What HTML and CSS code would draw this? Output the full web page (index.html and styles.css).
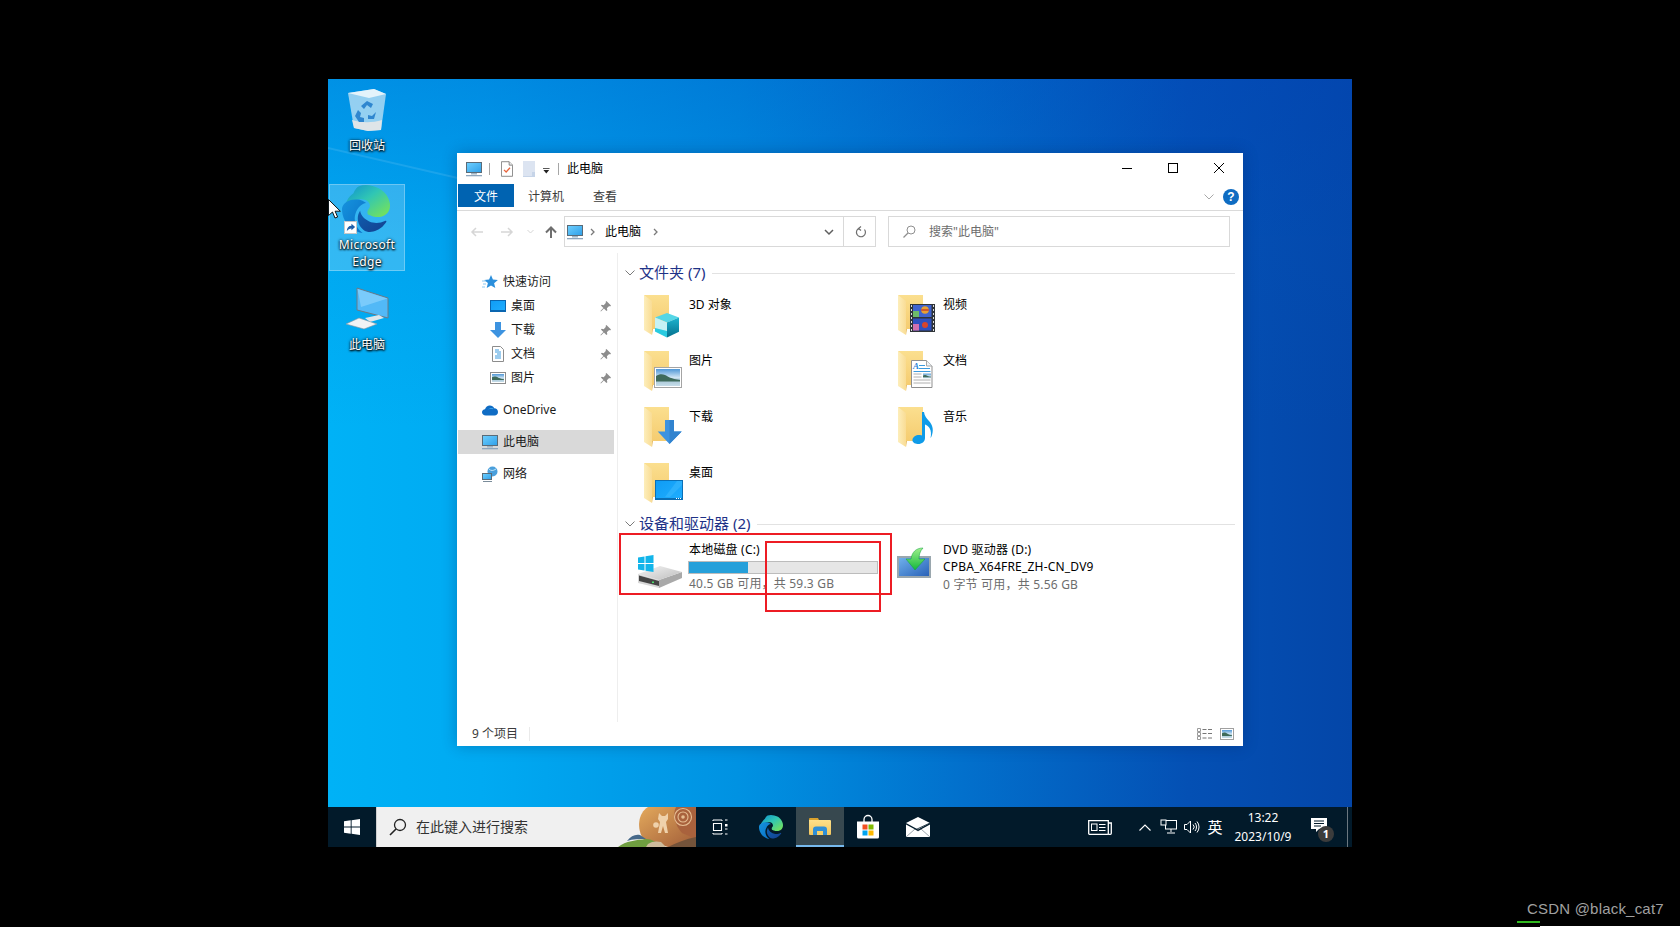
FILE: index.html
```html
<!DOCTYPE html>
<html lang="zh-CN">
<head>
<meta charset="utf-8">
<title>此电脑</title>
<link rel="stylesheet" href="styles.css">
</head>
<body>
<svg class="defs" aria-hidden="true">
  <defs>
    <linearGradient id="g-screen" x1="0" y1="0" x2="1" y2="1"><stop offset="0" stop-color="#6fd0ff"/><stop offset="1" stop-color="#2f9fe8"/></linearGradient>
    <linearGradient id="g-back" x1="0" y1="0" x2="0" y2="1"><stop offset="0" stop-color="#fbdf8f"/><stop offset="1" stop-color="#f5cc70"/></linearGradient>
    <linearGradient id="g-flap" x1="0" y1="0" x2="1" y2="0"><stop offset="0" stop-color="#fdeebb"/><stop offset="1" stop-color="#f9dc94"/></linearGradient>
    <linearGradient id="g-edge-top" x1="0" y1="0" x2="1" y2="1"><stop offset="0" stop-color="#0c8ed0"/><stop offset=".45" stop-color="#30c6b4"/><stop offset="1" stop-color="#7fe64e"/></linearGradient>
    <linearGradient id="g-edge-left" x1="0" y1="0" x2="1" y2="1"><stop offset="0" stop-color="#1593de"/><stop offset="1" stop-color="#0a6ec4"/></linearGradient>
    <linearGradient id="g-edge-low" x1="0" y1="0" x2="1" y2="1"><stop offset="0" stop-color="#0f5fb0"/><stop offset="1" stop-color="#13408f"/></linearGradient>
    <linearGradient id="g-sky" x1="0" y1="0" x2="0" y2="1"><stop offset="0" stop-color="#4f97d6"/><stop offset="1" stop-color="#dfeef7"/></linearGradient>
    <linearGradient id="g-water" x1="0" y1="0" x2="0" y2="1"><stop offset="0" stop-color="#6f9db4"/><stop offset="1" stop-color="#c6dde9"/></linearGradient>
    <linearGradient id="g-desk" x1="0" y1="0" x2="1" y2="1"><stop offset="0" stop-color="#0f9cf5"/><stop offset="1" stop-color="#20aeff"/></linearGradient>
    <linearGradient id="g-dvd" x1="0" y1="0" x2="1" y2="1"><stop offset="0" stop-color="#6fb0ec"/><stop offset="1" stop-color="#2a62b8"/></linearGradient>
    <linearGradient id="g-green" x1="0" y1="0" x2="0" y2="1"><stop offset="0" stop-color="#9cf08a"/><stop offset="1" stop-color="#14b83c"/></linearGradient>
    <linearGradient id="g-hdd" x1="0" y1="0" x2="1" y2="1"><stop offset="0" stop-color="#f4f4f4"/><stop offset="1" stop-color="#bdbdbd"/></linearGradient>
    <linearGradient id="g-cube" x1="0" y1="0" x2="0" y2="1"><stop offset="0" stop-color="#1db4cf"/><stop offset="1" stop-color="#05708d"/></linearGradient>
    <linearGradient id="g-doodle" x1="0" y1="0" x2="1" y2="1"><stop offset="0" stop-color="#e3a95c"/><stop offset="1" stop-color="#a05c38"/></linearGradient>
    <linearGradient id="g-taskfold" x1="0" y1="0" x2="0" y2="1"><stop offset="0" stop-color="#fde08a"/><stop offset="1" stop-color="#f3c65e"/></linearGradient>

    <symbol id="scene" viewBox="0 0 24 17" preserveAspectRatio="none">
      <rect width="24" height="17" fill="url(#g-water)"/>
      <rect width="24" height="9.500" fill="url(#g-sky)"/>
      <path d="M0 7c3-2 6-2.500 9-1 3 1.500 6 4 15 5v1.500H0z" fill="#3e6a5a"/>
    </symbol>
    <symbol id="i-pc" viewBox="0 0 16 16">
      <rect x=".5" y="1.500" width="15" height="10" fill="url(#g-screen)" stroke="#5a6b78"/>
      <rect x="5" y="12" width="6" height="1.500" fill="#9fb4c4"/>
      <rect x="0" y="14" width="16" height="1.300" fill="#8ea6bd"/>
    </symbol>
    <symbol id="i-star" viewBox="0 0 16 16">
      <path d="M9 1l1.900 4.600 5 .4-3.800 3.200 1.200 4.900L9 11.500 4.700 14l1.200-4.900L2.100 6l5-.4z" fill="#2b8fdc"/>
      <path d="M0 7h4M1 10h3M0 13h3" stroke="#8cc8f0" stroke-width="1"/>
    </symbol>
    <symbol id="i-desk" viewBox="0 0 16 16">
      <rect x=".5" y="2.500" width="15" height="11" fill="url(#g-desk)" stroke="#0a66b0"/>
      <rect x="1" y="12" width="14" height="1" fill="#0a66b0"/>
    </symbol>
    <symbol id="i-down" viewBox="0 0 16 16">
      <path d="M5 0h6v8h5l-8 8-8-8h5z" fill="#3d93e0"/>
    </symbol>
    <symbol id="i-doc" viewBox="0 0 16 16">
      <path d="M2.500 .5h8l3 3v12h-11z" fill="#fff" stroke="#8c8c8c"/>
      <path d="M5 4h4M5 6h6M7 8h4M5 10h6M5 12h6" stroke="#3b9ade"/>
    </symbol>
    <symbol id="i-pic" viewBox="0 0 16 16">
      <rect x=".5" y="2.500" width="15" height="11" fill="#fff" stroke="#8c8c8c"/>
      <use href="#scene" x="2" y="4" width="12" height="8"/>
    </symbol>
    <symbol id="i-pin" viewBox="0 0 12 12">
      <path d="M7 0l5 5-1 1-1-.5L7.500 8l.5 2-1 1-2.700-2.700L1 11.500.5 11l3.200-3.300L1 5l1-1 2 .5L6.500 2 6 1z" fill="#8d8d8d"/>
    </symbol>
    <symbol id="i-cloud" viewBox="0 0 16 16">
      <path d="M4 13.500C1.500 13.500 0 12 0 10.300 0 8.500 1.300 7.300 3 7.200 3.700 5 5.500 3.500 7.800 3.500c2 0 3.600 1 4.400 2.700 2.200 0 3.800 1.600 3.800 3.700 0 2.100-1.500 3.600-3.500 3.600z" fill="#0f6cc4"/>
      <path d="M6 7.500c1-1.500 3.500-2 5.500-1.300l-.5 1c-2-.2-3.500 0-5 .3z" fill="#3aa0ea"/>
    </symbol>
    <symbol id="i-net" viewBox="0 0 16 16">
      <circle cx="10.500" cy="5.500" r="5" fill="#4a9fdc"/>
      <path d="M7 3c2 2 4 2 7 0" stroke="#bfe3f7" fill="none"/>
      <rect x=".5" y="7.500" width="9" height="6" fill="url(#g-screen)" stroke="#5a6b78"/>
      <rect x="1" y="15" width="9" height="1" fill="#7a8c9a"/>
    </symbol>
    <symbol id="i-check" viewBox="0 0 14 18">
      <path d="M.5 .5h9l4 4v13H.5z" fill="#fff" stroke="#777"/>
      <path d="M9.500 .5v4h4" fill="#eee" stroke="#777"/>
      <path d="M3.500 10l2.500 2.500 4.500-5" fill="none" stroke="#e8643c" stroke-width="1.500"/>
    </symbol>
    <symbol id="i-blank" viewBox="0 0 12 16">
      <rect width="12" height="16" fill="#dce4f1"/>
      <path d="M9 11h3v5H0v-1h9z" fill="#c6d4e8"/>
    </symbol>
    <symbol id="i-folder" viewBox="0 0 48 48">
      <path d="M1 3h25v34H9z" fill="url(#g-back)"/>
      <path d="M1 3l8 6v34l-8-5z" fill="url(#g-flap)"/>
      <path d="M9 37v6l1-6z" fill="#e4b962"/>
    </symbol>
    <symbol id="o-cube" viewBox="0 0 48 48">
      <path d="M24 21l12 4.500L24 30.500 12 25.500z" fill="#55d6e6"/>
      <path d="M12 25.500l12 5V45.500l-12-6z" fill="#c6f2f4"/>
      <path d="M24 30.500l12-5v14.200l-12 5.800z" fill="url(#g-cube)"/>
      <path d="M12 36l12 3v6.500l-12-6z" fill="#29cbe0"/>
    </symbol>
    <symbol id="o-pic" viewBox="0 0 48 48">
      <rect x="11.500" y="19.500" width="27" height="20" fill="#fff" stroke="#a4a4a4"/>
      <use href="#scene" x="13" y="21" width="24" height="17"/>
    </symbol>
    <symbol id="o-down" viewBox="0 0 48 48">
      <path d="M22 16h9v11.500h7.700L26.500 40 14.700 27.500H22z" fill="#3d93e0"/>
      <path d="M26.500 16H31v11.500h7.700L26.500 40z" fill="#3183cf"/>
    </symbol>
    <symbol id="o-desk" viewBox="0 0 48 48">
      <rect x="12.500" y="20.500" width="27" height="19" fill="url(#g-desk)" stroke="#0b6fb6"/>
      <path d="M13 38h26v1.500H13z" fill="#0b6fb6"/>
      <path d="M33 38.500h1M35 38.500h1M37 38.500h1" stroke="#fff"/>
      <path d="M22 37l12-16h5v4L27 37z" fill="#3fbcff" opacity=".5"/>
    </symbol>
    <symbol id="o-film" viewBox="0 0 48 48">
      <rect x="13" y="12" width="25" height="28" fill="#2f3438"/>
      <rect x="16" y="13" width="18.500" height="12" fill="#3f63cf"/>
      <rect x="16" y="26.500" width="18.500" height="12" fill="#2e50c0"/>
      <path d="M16 19h6v6h-6z" fill="#6dbb6a"/>
      <circle cx="28" cy="18" r="3.800" fill="#e8a030"/>
      <path d="M24.200 18h7.600" stroke="#c8402a" stroke-width="1.500"/>
      <circle cx="28" cy="33" r="3" fill="#d8452c"/>
      <path d="M16 32h6v6.500h-6z" fill="#d070b0"/>
      <path d="M14 14h1M14 18h1M14 22h1M14 26h1M14 30h1M14 34h1M14 38h1M36 14h1M36 18h1M36 22h1M36 26h1M36 30h1M36 34h1M36 38h1" stroke="#ddd" stroke-width="2"/>
    </symbol>
    <symbol id="o-docs" viewBox="0 0 48 48">
      <path d="M14.500 12.500h15l5.500 5.500v21.500H14.500z" fill="#fff" stroke="#8f8f8f"/>
      <path d="M29.500 12.500V18H35" fill="#eef3f8" stroke="#a6a6a6"/>
      <text class="doc-a" x="16" y="21">A</text>
      <path d="M22 17.500h6M22 20.500h11M16.500 23.500h17" stroke="#3b9ade"/>
      <path d="M16.500 26h8M16.500 29h8M16.500 32h17M16.500 35h17" stroke="#b0b0b0"/>
      <use href="#scene" x="26" y="25.500" width="8" height="5"/>
    </symbol>
    <symbol id="o-note" viewBox="0 0 48 48">
      <path d="M25 8l2 0c.5 4 2.500 6 5 9 3 3.500 5 7.500 3 14-.5 1.500-1 2.500-1.500 3 .8-3.500.8-7-1-10-1.200-2-3-3-4.500-3.500V34c0 4-3.500 6.300-7.500 6-3-.2-5.500-2-5-4.500.5-3 4-5 7.500-4.500 1 .1 1.500.3 2 .5z" fill="#0f9be8"/>
    </symbol>
    <symbol id="i-hdd" viewBox="0 0 48 48">
      <path d="M2 34l21 6v8L2 43z" fill="#d8d8d8"/>
      <path d="M23 40l23-8v6l-23 10z" fill="#a9a9a9"/>
      <path d="M2 34l22-8 22 6-23 8z" fill="url(#g-hdd)"/>
      <path d="M3 35.500l20 5.500v5L3 41z" fill="#454545"/>
      <rect x="16" y="41.500" width="2" height="1.500" fill="#4be06a"/>
      <path d="M2 17.500l6.500-1v6.500H2zM9.500 16.300l8-1.300V23h-8zM2 24h6.500v6.500L2 29.500zM9.500 24h8v8l-8-1.300z" fill="#12b5ea"/>
    </symbol>
    <symbol id="i-dvd" viewBox="0 0 48 48">
      <rect x="7" y="16" width="34" height="22" fill="#9aa7ae"/>
      <rect x="9" y="18" width="30" height="18" fill="url(#g-dvd)"/>
      <path d="M33 8c-7 0-11 4-12 11h-5l9 11 10-11h-6c0-4 1-8 4-11z" fill="url(#g-green)" stroke="#0e9e3a" stroke-width=".5"/>
    </symbol>
    <symbol id="i-details" viewBox="0 0 16 12">
      <path d="M.5 .5h3v3h-3zM.5 4.500h3v3h-3zM.5 8.500h3v3h-3z" fill="#fff" stroke="#9a9a9a"/>
      <path d="M5.500 1.500h4M11 1.500h4M5.500 5.500h4M11 5.500h4M5.500 10h4M11 10h4" stroke="#777"/>
    </symbol>
    <symbol id="i-large" viewBox="0 0 14 12">
      <rect x=".5" y=".5" width="13" height="11" fill="#fff" stroke="#a0a0a0"/>
      <use href="#scene" x="2" y="2" width="10" height="8"/>
    </symbol>
    <symbol id="i-edge" viewBox="0 0 24 24">
      <path d="M11.960.06q1.700 0 3.330.39 1.630.38 3.070 1.150 1.430.77 2.620 1.930 1.180 1.160 1.980 2.700.49.94.76 1.960.28 1 .28 2.080 0 .89-.23 1.700-.24.8-.69 1.480-.45.68-1.100 1.220-.64.53-1.450.88-.54.24-1.110.36-.58.13-1.160.13-.42 0-.97-.03-.54-.03-1.100-.12-.55-.09-1.090-.28-.54-.19-1-.48T13.370 15q-.3-.28-.5-.55-.17-.31-.17-.84 0-.35.13-.69.13-.33.3-.63.19-.3.38-.59.2-.28.34-.53.13-.33.13-.62 0-.65-.3-1.300-.29-.65-.9-1.130-.68-.52-1.520-.75-.84-.22-1.730-.22-1.340 0-2.500.42-1.150.41-2.150 1.110-1 .7-1.850 1.600-.83.9-1.500 1.870-.02-1.250.28-2.410.3-1.170.85-2.200.55-1.030 1.330-1.910.77-.88 1.720-1.550Q7 1.070 8.550.57q1.560-.5 3.410-.51z" fill="url(#g-edge-top)"/>
      <path d="M6.360 16.590q0 1.100.27 2.150.27 1.060.78 2.030.51.96 1.240 1.770.74.82 1.660 1.400-1.470-.2-2.800-.74-1.330-.55-2.480-1.370-1.150-.83-2.080-1.900-.92-1.070-1.580-2.330T.36 14.940Q0 13.540 0 12.060q0-.81.32-1.490.31-.68.83-1.230.53-.55 1.200-.96.66-.4 1.350-.66.74-.27 1.500-.39.78-.12 1.550-.12.7 0 1.420.1.720.12 1.400.35.68.23 1.320.57.63.35 1.160.83-.35 0-.7.07-.33.07-.65.23v-.02q-.63.28-1.200.74-.57.46-1.050 1.040-.48.58-.87 1.260-.38.67-.65 1.390-.27.71-.42 1.440-.15.72-.15 1.380z" fill="url(#g-edge-left)"/>
      <path d="M21.860 17.860q.14 0 .25.12.1.13.1.25t-.11.33l-.32.46-.43.53-.44.5q-.21.25-.38.42l-.22.23q-.58.53-1.340 1.040-.76.51-1.600.91-.86.4-1.740.64t-1.670.24q-.9 0-1.690-.28-.8-.28-1.480-.78-.68-.5-1.220-1.170-.53-.66-.92-1.440-.38-.77-.58-1.600-.2-.83-.2-1.670 0-1 .32-1.960.33-.97.87-1.800.14.95.55 1.770.41.82 1.020 1.500.6.68 1.380 1.210.78.54 1.640.9.86.36 1.770.56.92.2 1.800.2 1.120 0 2.180-.24 1.060-.23 2.060-.72l.2-.1.2-.05z" fill="url(#g-edge-low)"/>
    </symbol>
    <symbol id="i-win" viewBox="0 0 16 16">
      <path d="M0 2.300l6.700-1v6.300H0zM7.600 1.200L16 0v7.600H7.600zM0 8.400h6.700v6.300l-6.700-1zM7.600 8.400H16V16l-8.400-1.200z" fill="#fff"/>
    </symbol>
  </defs>
</svg>

<main class="desktop">
  <div class="canvas">
    <div class="ray ray-a"></div>

    <div class="d-icon d-bin">
      <svg class="d-art" viewBox="0 0 48 48">
        <path d="M5 6l26-4 12 5-5 36-13 1-14-3z" fill="#b9dff4" fill-opacity=".8"/>
        <path d="M5 6l26-4 12 5-17 4z" fill="#e4f3fb"/>
        <path d="M9 33c10 3 20 3 30 0l-1 10-13 1-14-3z" fill="#dfe5e8"/>
        <path d="M24 14l6 3-2 4-4-3-3 4-3-3zM33 25l-2 7h-6v-4l4 1zM15 23l3 3-1 4 4 1v4h-5l-4-6z" fill="#2f86cf"/>
      </svg>
      <span class="d-label">回收站</span>
    </div>

    <div class="d-icon d-edge">
      <svg class="d-art"><use href="#i-edge"/></svg>
      <svg class="d-short" viewBox="0 0 14 14">
        <rect x=".5" y=".5" width="13" height="13" fill="#fff" stroke="#c8c8c8"/>
        <path d="M3 11c0-4 2-6 5-6V3l4 3.500L8 10V8c-2 0-3.500 1-5 3z" fill="#1f5fa8"/>
      </svg>
      <span class="d-label d-label-latin">Microsoft Edge</span>
    </div>

    <div class="d-icon d-pc">
      <svg class="d-art" viewBox="0 0 48 48">
        <path d="M14 -1l31 10v20L14 21z" fill="#52b9f7" stroke="#6d7a86"/>
        <path d="M14.500 0l30 9.500L18 18z" fill="#9adbff" opacity=".55"/>
        <path d="M22 29l14-3 5 3-14 4z" fill="#dfe7ec"/>
        <path d="M3 35l13-6 18 6-13 5z" fill="#f0f3f5" stroke="#8a96a0" stroke-width=".6"/>
      </svg>
      <span class="d-label">此电脑</span>
    </div>

    <svg class="cursor" viewBox="0 0 13 20">
      <path d="M.5 .5v16l4-3.500 2.500 6 2.600-1-2.500-5.800h5.200z" fill="#fff" stroke="#000" stroke-width=".9"/>
    </svg>

    <section class="window">
      <header class="titlebar">
        <svg class="i16"><use href="#i-pc"/></svg>
        <span class="qsep"></span>
        <svg class="qa-doc"><use href="#i-check"/></svg>
        <svg class="qa-doc"><use href="#i-blank"/></svg>
        <svg class="qa-caret" viewBox="0 0 8 8"><path d="M0 1h7.500v1H0zM.5 3.500h6.500L3.750 7.500z" fill="#222"/></svg>
        <span class="qsep qsep-b"></span>
        <span class="win-title">此电脑</span>
        <div class="win-ctrls">
          <button class="ctl"><svg class="ctl-i" viewBox="0 0 10 10"><path d="M0 5.500h10" stroke="#000"/></svg></button>
          <button class="ctl"><svg class="ctl-i" viewBox="0 0 10 10"><rect x=".5" y=".5" width="9" height="9" fill="none" stroke="#000"/></svg></button>
          <button class="ctl"><svg class="ctl-i" viewBox="0 0 10 10"><path d="M0 0l10 10M10 0L0 10" stroke="#000"/></svg></button>
        </div>
      </header>

      <nav class="tabs">
        <span class="tab tab-file">文件</span>
        <span class="tab">计算机</span>
        <span class="tab">查看</span>
        <svg class="tab-chev" viewBox="0 0 10 6"><path d="M.5 .5L5 5 9.500 .5" fill="none" stroke="#a8a8a8"/></svg>
        <span class="help">?</span>
      </nav>

      <div class="addrrow">
        <svg class="nav-arrow" viewBox="0 0 12 10"><path d="M12 5H1M5 1L1 5l4 4" fill="none" stroke="#d6d6d6" stroke-width="1.500"/></svg>
        <svg class="nav-arrow nav-fwd" viewBox="0 0 12 10"><path d="M0 5h11M7 1l4 4-4 4" fill="none" stroke="#d6d6d6" stroke-width="1.500"/></svg>
        <svg class="nav-drop" viewBox="0 0 7 5"><path d="M.5 1l3 3 3-3" fill="none" stroke="#d6d6d6"/></svg>
        <svg class="nav-up" viewBox="0 0 12 12"><path d="M6 12V1.500M1 6.500l5-5 5 5" fill="none" stroke="#6e6e6e" stroke-width="2"/></svg>
        <div class="addr">
          <svg class="i16 addr-pc"><use href="#i-pc"/></svg>
          <svg class="crumb" viewBox="0 0 5 8"><path d="M1 1l3 3-3 3" fill="none" stroke="#7a7a7a" stroke-width="1.300"/></svg>
          <span class="addr-text">此电脑</span>
          <svg class="crumb" viewBox="0 0 5 8"><path d="M1 1l3 3-3 3" fill="none" stroke="#7a7a7a" stroke-width="1.300"/></svg>
          <svg class="addr-drop" viewBox="0 0 10 6"><path d="M1 1l4 4 4-4" fill="none" stroke="#5f5f5f" stroke-width="1.500"/></svg>
          <span class="addr-refresh">
            <svg class="refresh-i" viewBox="0 0 12 12"><path d="M4 2.200A4.500 4.500 0 1 0 9.500 3.500M6 .5L3.500 2.400 6 4.500" fill="none" stroke="#6e6e6e" stroke-width="1.200"/></svg>
          </span>
        </div>
        <div class="search">
          <svg class="search-i" viewBox="0 0 13 13"><circle cx="8" cy="5" r="4" fill="none" stroke="#8f8f8f"/><path d="M5 8l-4.500 4.500" stroke="#8f8f8f" stroke-width="1.200"/></svg>
          <span>搜索"此电脑"</span>
        </div>
      </div>

      <div class="body">
        <aside class="side">
          <div class="side-row side-root"><svg class="i16"><use href="#i-star"/></svg><span>快速访问</span></div>
          <div class="side-row side-sub"><svg class="i16"><use href="#i-desk"/></svg><span>桌面</span><svg class="pin"><use href="#i-pin"/></svg></div>
          <div class="side-row side-sub"><svg class="i16"><use href="#i-down"/></svg><span>下载</span><svg class="pin"><use href="#i-pin"/></svg></div>
          <div class="side-row side-sub"><svg class="i16"><use href="#i-doc"/></svg><span>文档</span><svg class="pin"><use href="#i-pin"/></svg></div>
          <div class="side-row side-sub"><svg class="i16"><use href="#i-pic"/></svg><span>图片</span><svg class="pin"><use href="#i-pin"/></svg></div>
          <div class="side-row side-root side-gap"><svg class="i16"><use href="#i-cloud"/></svg><span>OneDrive</span></div>
          <div class="side-row side-root side-gap side-sel"><svg class="i16"><use href="#i-pc"/></svg><span>此电脑</span></div>
          <div class="side-row side-root side-gap"><svg class="i16"><use href="#i-net"/></svg><span>网络</span></div>
        </aside>

        <div class="content">
          <h2 class="group"><svg class="group-chev" viewBox="0 0 10 6"><path d="M.5 .5L5 5 9.500 .5" fill="none" stroke="#7a7a7a"/></svg><span class="group-name">文件夹 (7)</span><i class="group-line"></i></h2>
          <div class="folders">
            <div class="item"><svg class="art"><use href="#i-folder"/><use href="#o-cube"/></svg><span class="name">3D 对象</span></div>
            <div class="item"><svg class="art"><use href="#i-folder"/><use href="#o-film"/></svg><span class="name">视频</span></div>
            <div class="item"><svg class="art"><use href="#i-folder"/><use href="#o-pic"/></svg><span class="name">图片</span></div>
            <div class="item"><svg class="art"><use href="#i-folder"/><use href="#o-docs"/></svg><span class="name">文档</span></div>
            <div class="item"><svg class="art"><use href="#i-folder"/><use href="#o-down"/></svg><span class="name">下载</span></div>
            <div class="item"><svg class="art"><use href="#i-folder"/><use href="#o-note"/></svg><span class="name">音乐</span></div>
            <div class="item"><svg class="art"><use href="#i-folder"/><use href="#o-desk"/></svg><span class="name">桌面</span></div>
          </div>
          <h2 class="group"><svg class="group-chev" viewBox="0 0 10 6"><path d="M.5 .5L5 5 9.500 .5" fill="none" stroke="#7a7a7a"/></svg><span class="group-name">设备和驱动器 (2)</span><i class="group-line"></i></h2>
          <div class="drives">
            <div class="drive">
              <svg class="art"><use href="#i-hdd"/></svg>
              <div class="drive-text">
                <span class="dline dline-first">本地磁盘 (C:)</span>
                <div class="meter"><div class="meter-fill" style="width:31.5%"></div></div>
                <span class="dline dim">40.5 GB 可用，共 59.3 GB</span>
              </div>
            </div>
            <div class="drive">
              <svg class="art"><use href="#i-dvd"/></svg>
              <div class="drive-text">
                <span class="dline dline-first">DVD 驱动器 (D:)</span>
                <span class="dline dline-mid">CPBA_X64FRE_ZH-CN_DV9</span>
                <span class="dline dim">0 字节 可用，共 5.56 GB</span>
              </div>
            </div>
          </div>
          <div class="mark mark-a"></div>
          <div class="mark mark-b"></div>
        </div>
      </div>

      <footer class="status">
        <span class="status-count">9 个项目</span>
        <i class="status-sep"></i>
        <svg class="st-details"><use href="#i-details"/></svg>
        <svg class="st-large"><use href="#i-large"/></svg>
      </footer>
    </section>
  </div>

  <div class="taskbar">
    <span class="tb-btn tb-start"><svg class="i16"><use href="#i-win"/></svg></span>
    <div class="tb-search">
      <svg class="tb-mag" viewBox="0 0 18 18"><circle cx="11" cy="7" r="5.500" fill="none" stroke="#222" stroke-width="1.300"/><path d="M7 11l-6 6" stroke="#222" stroke-width="1.600"/></svg>
      <span>在此键入进行搜索</span>
      <svg class="doodle" viewBox="0 0 78 40" preserveAspectRatio="none">
        <path d="M26 33C18 22 20 6 30 0h48v40H50z" fill="url(#g-doodle)"/>
        <path d="M58 0h20v32l-14-6c-7-8-10-18-6-26z" fill="#a9623d"/>
        <circle cx="65" cy="10" r="8.500" fill="none" stroke="#e6bd92" stroke-width="1.100"/>
        <circle cx="65" cy="10" r="5" fill="none" stroke="#e6bd92" stroke-width="1.100"/>
        <circle cx="65" cy="10" r="1.800" fill="#e6bd92"/>
        <path d="M41 6l3 3h3l3-3v6l-2 3 2 11h-3l-2-7-2 7h-3l2-11-2-3z" fill="#efd1ab"/>
        <circle cx="38" cy="18" r="2.800" fill="#efd1ab"/>
        <path d="M50 40c8-4 18-8 28-10v10z" fill="#74533a"/>
        <path d="M0 40c8-6 18-7 28-8 6 0 10 3 16 8z" fill="#6f9e40"/>
        <path d="M9 34c4-5 8-7 13-6l6 4c-7 0-13 0-19 2z" fill="#46698a"/>
        <path d="M30 37c4-3 9-3 13-2l5 5H28z" fill="#cdbb9c"/>
      </svg>
    </div>
    <span class="tb-btn tb-view">
      <svg class="tb-ic" viewBox="0 0 16 16"><path d="M1 1h9M1 15h9M1.500 4.500h8v7h-8zM1 1v1M10 1v1M1 14v1M10 14v1" fill="none" stroke="#fff" stroke-width="1.100"/><path d="M13 5h2.500v2.500H13z" fill="#fff"/><path d="M13 1h2.500M13 10h2.500M13 15h2.500" stroke="#fff"/></svg>
    </span>
    <span class="tb-btn tb-edge"><svg class="tb-ic-lg"><use href="#i-edge"/></svg></span>
    <span class="tb-btn tb-active">
      <svg class="tb-ic-fold" viewBox="0 0 22 18">
        <path d="M0 2a1 1 0 0 1 1-1h8l1 2H0z" fill="#d9a22e"/>
        <path d="M0 3h21a1 1 0 0 1 1 1v13a1 1 0 0 1-1 1H1a1 1 0 0 1-1-1z" fill="url(#g-taskfold)"/>
        <path d="M4 18v-5.500C4 10.500 5 9.500 7 9.500h8c2 0 3 1 3 3V18h-4v-4H8v4z" fill="#2f8fd6"/>
        <rect x="8" y="14" width="6" height="4" fill="#f8d068"/>
      </svg>
    </span>
    <span class="tb-btn">
      <svg class="tb-ic-lg" viewBox="0 0 24 24">
        <path d="M8 7V4.500a4 4 0 0 1 8 0V7" fill="none" stroke="#fff" stroke-width="1.300"/>
        <path d="M1 6.500h22V22a1.500 1.500 0 0 1-1.500 1.500h-19A1.500 1.500 0 0 1 1 22z" fill="#fff"/>
        <rect x="6.500" y="9.500" width="5" height="5" fill="#f25022"/>
        <rect x="12.500" y="9.500" width="5" height="5" fill="#7fba00"/>
        <rect x="6.500" y="15.500" width="5" height="5" fill="#00a4ef"/>
        <rect x="12.500" y="15.500" width="5" height="5" fill="#ffb900"/>
      </svg>
    </span>
    <span class="tb-btn tb-mail">
      <svg class="tb-ic-lg" viewBox="0 0 24 24">
        <path d="M0 8L12 2l12 6-12 6.500z" fill="#fff"/>
        <path d="M0 9.500V22h24V9.500L12 16z" fill="#fff"/>
        <path d="M10 14.500L24 8" stroke="#021a2a" stroke-width=".8" fill="none"/>
        <path d="M0 22l9-8 3 2 3-2 9 8" fill="none" stroke="#021a2a" stroke-width=".4"/>
      </svg>
    </span>

    <div class="tray">
      <span class="tr tr-news">
        <svg class="tr-news-i" viewBox="0 0 24 15"><path d="M.7 .7h19.600V13.500a.8.8 0 0 1-.8.8H1.500a.8.8 0 0 1-.8-.8zM20.300 3h3v10.300a1 1 0 0 1-1 1h-2" fill="none" stroke="#fff" stroke-width="1.300"/><rect x="3.500" y="4" width="5.500" height="6.500" fill="none" stroke="#fff"/><path d="M11 4.500h6.500M11 7.500h6.500M11 10.500h6.500" stroke="#fff"/></svg>
      </span>
      <span class="tr tr-chev"><svg class="tr-chev-i" viewBox="0 0 12 7"><path d="M.5 6.500L6 1l5.500 5.500" fill="none" stroke="#fff" stroke-width="1.100"/></svg></span>
      <span class="tr tr-net"><svg class="tr-ic" viewBox="0 0 16 14"><rect x="4.500" y=".5" width="11" height="8.500" fill="none" stroke="#fff"/><rect x="0" y="0" width="5" height="5" fill="#021a2a" stroke="#fff"/><path d="M10 9v3M6 13h8" stroke="#fff"/></svg></span>
      <span class="tr tr-vol"><svg class="tr-ic" viewBox="0 0 16 14"><path d="M.5 4.500h2.500L6.500 1v12L3 9.500H.5z" fill="none" stroke="#fff"/><path d="M9 4.500a3.500 3.500 0 0 1 0 5M11 3a6 6 0 0 1 0 8M13 1.500a8.500 8.500 0 0 1 0 11" fill="none" stroke="#fff"/></svg></span>
      <span class="tr tr-ime">英</span>
      <span class="tr tr-clock"><span>13:22</span><span>2023/10/9</span></span>
      <span class="tr tr-notif">
        <svg class="tr-note" viewBox="0 0 16 15"><path d="M0 0h16v11H8l-3 3v-3H0z" fill="#fff"/><path d="M3 3h10M3 5.500h10M3 8h7" stroke="#021a2a"/></svg>
        <span class="badge">1</span>
      </span>
      <span class="tr-show"></span>
    </div>
  </div>
</main>

<span class="watermark">CSDN @black_cat7</span>
<div class="artifact"></div>
</body>
</html>
```

FILE: styles.css
```css
* { box-sizing: border-box; }
html, body { margin: 0; height: 100%; }
body {
  position: relative;
  overflow: hidden;
  background: #000;
  padding: 79px 0 0 328px;
  font: 12px/16px "Noto Sans", "Noto Sans CJK SC", sans-serif;
  color: #000;
}
.defs { position: absolute; width: 0; height: 0; }
svg { display: block; flex: none; overflow: visible; }
h2 { margin: 0; font-weight: 400; }
button { border: 0; background: none; padding: 0; }
.doc-a { font: italic 700 9px "Liberation Serif", serif; fill: #2a86d8; }

.desktop { width: 1024px; height: 768px; display: flex; flex-direction: column; }

.canvas {
  position: relative;
  flex: 1;
  overflow: hidden;
  background:
    linear-gradient(180deg, rgba(0, 70, 190, .3) 0, rgba(0, 90, 200, .12) 22%, transparent 48%),
    linear-gradient(90deg, #00b2f6 0%, #00aaf2 15%, #0092e2 40%, #0270cc 62%, #0450b4 84%, #0446a8 100%);
}
.ray {
  position: absolute;
  height: 2px;
  width: 150px;
  left: 0;
  top: 68px;
  background: rgba(255, 255, 255, .1);
  transform-origin: 0 0;
  transform: rotate(13deg);
}

/* desktop icons */
.d-icon {
  position: absolute;
  width: 76px;
  display: flex;
  flex-direction: column;
  align-items: center;
  color: #fff;
}
.d-label {
  text-align: center;
  line-height: 17px;
  text-shadow: 0 1px 2px #000, 0 0 3px rgba(0, 0, 0, .85), 1px 1px 2px rgba(0, 0, 0, .6);
}
.d-label-latin { letter-spacing: .35px; }
.d-art { width: 48px; height: 48px; }
.d-bin { left: 1px; top: 8px; }
.d-bin .d-label { margin-top: 2px; }
.d-edge {
  left: 1px;
  top: 105px;
  height: 87px;
  border: 1px solid rgba(255, 255, 255, .28);
  background: rgba(255, 255, 255, .2);
}
.d-edge .d-art { margin-left: -3px; }
.d-edge .d-label { margin-top: 3px; }
.d-short { position: absolute; left: 14px; top: 36px; width: 13px; height: 13px; }
.d-pc { left: 1px; top: 210px; }
.d-pc .d-label { margin-top: -1px; }
.cursor { position: absolute; left: 0; top: 120px; width: 13px; height: 20px; }

/* explorer window */
.window {
  position: absolute;
  left: 129px;
  top: 74px;
  width: 786px;
  height: 593px;
  display: flex;
  flex-direction: column;
  background: #fff;
  box-shadow: 0 0 14px rgba(0, 30, 80, .3);
}
.titlebar { height: 31px; display: flex; align-items: center; padding-left: 9px; }
.i16 { width: 16px; height: 16px; }
.qsep { width: 1px; height: 12px; background: #a6a6a6; margin: 0 11px 0 7px; }
.qsep-b { margin: 0 8px 0 8px; }
.qa-doc { width: 12px; height: 16px; margin-right: 10px; }
.qa-caret { width: 7px; height: 7px; margin: 3px 0 0 -2px; }
.win-title { font-size: 12px; }
.win-ctrls { margin-left: auto; margin-right: 1px; display: flex; height: 31px; }
.ctl { width: 46px; display: flex; align-items: center; justify-content: center; padding-bottom: 2px; }
.ctl-i { width: 10px; height: 10px; }

.tabs {
  height: 27px;
  padding-left: 1px;
  padding-right: 4px;
  display: flex;
  align-items: flex-start;
  border-bottom: 1px solid #dadada;
  color: #3b3b3b;
}
.tab { height: 23px; line-height: 25px; padding: 0 14px; margin-right: 1px; }
.tab-file { width: 56px; margin-right: 0; padding: 0 10px; text-align: center; background: #0063b1; color: #fff; }
.tab-chev { width: 10px; height: 6px; margin: 10px 0 0 auto; }
.help {
  width: 16px;
  height: 16px;
  margin: 5px 0 0 9px;
  border-radius: 50%;
  background: #0f6cc2;
  color: #fff;
  font: 700 12px/16px "Liberation Sans", sans-serif;
  text-align: center;
}

.addrrow { height: 42px; padding: 5px 13px 6px 14px; display: flex; align-items: center; }
.nav-arrow { width: 12px; height: 10px; }
.nav-fwd { margin-left: 18px; }
.nav-drop { width: 7px; height: 5px; margin-left: 14px; }
.nav-up { width: 12px; height: 12px; margin-left: 11px; }
.addr {
  width: 312px;
  height: 31px;
  margin-left: 7px;
  border: 1px solid #d9d9d9;
  display: flex;
  align-items: center;
  padding-left: 2px;
}
.crumb { width: 5px; height: 8px; margin-left: 7px; }
.addr-text { margin-left: 10px; margin-right: 5px; }
.addr-drop { width: 10px; height: 6px; margin-left: auto; margin-right: 9px; }
.addr-refresh {
  width: 32px;
  height: 100%;
  border-left: 1px solid #d9d9d9;
  padding-left: 2px;
  display: flex;
  align-items: center;
  justify-content: center;
}
.refresh-i { width: 12px; height: 12px; }
.search {
  width: 342px;
  height: 31px;
  margin-left: 12px;
  border: 1px solid #d9d9d9;
  display: flex;
  align-items: center;
  padding-left: 14px;
  color: #6d6d6d;
}
.search-i { width: 13px; height: 13px; margin-right: 13px; }

.body { flex: 1; display: flex; min-height: 0; }
.side { width: 161px; padding: 17px 3px 0 1px; border-right: 1px solid #eeeeee; }
.side-row { height: 24px; display: flex; align-items: center; color: #1a1a1a; }
.side-root { padding-left: 24px; }
.side-root span { margin-left: 5px; }
.side-sub { padding-left: 32px; }
.side-sub span { margin-left: 5px; }
.side-gap { margin-top: 8px; }
.side-sel { background: #d9d9d9; }
.pin { width: 11px; height: 11px; margin-left: auto; margin-right: 3px; }

.content { position: relative; flex: 1; padding: 9px 8px 0 0; }
.group { display: flex; align-items: center; height: 22px; font-size: 15px; color: #1e3287; padding-left: 7px; }
.group-chev { width: 10px; height: 6px; margin-right: 4px; }
.group-name { margin-bottom: 3px; }
.group-line { flex: 1; height: 1px; background: #e2e2e2; margin-left: 7px; }
.folders {
  display: grid;
  grid-template-columns: 254px 254px;
  grid-auto-rows: 52px;
  row-gap: 4px;
  padding: 8px 0 0 25px;
  margin-bottom: 1px;
}
.item { display: flex; align-items: flex-start; }
.art { width: 48px; height: 48px; }
.item .art { margin-right: -2px; }
.name { line-height: 18px; padding-top: 4px; box-sizing: content-box; }
.drives { display: grid; grid-template-columns: 254px 254px; padding: 5px 0 0 18px; }
.drive { display: flex; align-items: flex-start; }
.drive .art { margin-right: 5px; }
.drive-text { display: flex; flex-direction: column; width: 190px; }
.dline { line-height: 18px; white-space: nowrap; letter-spacing: .2px; }
.dline-first { position: relative; top: 1px; }
.dim { color: #6d6d6d; }
.meter {
  width: 190px;
  height: 13px;
  margin: 3px 0 1px -1px;
  background: #e6e6e6;
  border: 1px solid #bcbcbc;
}
.meter-fill { height: 100%; background: #26a0da; }
.mark { position: absolute; border: 2px solid #ed1c24; }
.mark-a { left: 1px; top: 280px; width: 273px; height: 62px; }
.mark-b { left: 147px; top: 288px; width: 116px; height: 71px; }

.status { height: 24px; padding: 0 9px 0 15px; display: flex; align-items: center; color: #3b3b3b; }
.status-sep { width: 1px; height: 14px; background: #eaeaea; margin-left: 11px; }
.st-details { width: 16px; height: 12px; margin-left: auto; margin-right: 7px; }
.st-large { width: 14px; height: 12px; }

/* taskbar */
.taskbar { height: 40px; flex: none; background: #021a2a; display: flex; color: #fff; }
.tb-btn { width: 48px; display: flex; align-items: center; justify-content: center; }
.tb-view { width: 52px; padding-right: 4px; }
.tb-edge { padding-right: 3px; }
.tb-mail { padding-left: 4px; }
.tb-search {
  width: 320px;
  display: flex;
  align-items: center;
  background: #f0f0f0;
  border-left: 1px solid #cfcfcf;
  padding-left: 12px;
  font-size: 14px;
  color: #333;
}
.tb-mag { width: 18px; height: 18px; margin-right: 9px; }
.doodle { width: 78px; height: 40px; margin-left: auto; }
.tb-ic { width: 16px; height: 16px; }
.tb-ic-lg { width: 24px; height: 24px; }
.tb-ic-fold { width: 22px; height: 18px; }
.tb-active { background: #37484f; border-bottom: 2px solid #76b9ed; }
.tray { margin-left: auto; display: flex; align-items: stretch; }
.tr { display: flex; align-items: center; justify-content: center; }
.tr-news { width: 32px; }
.tr-news-i { width: 24px; height: 15px; }
.tr-chev { width: 25px; margin-left: 16px; }
.tr-chev-i { width: 12px; height: 7px; }
.tr-net, .tr-vol { width: 23px; }
.tr-ic { width: 16px; height: 14px; }
.tr-ime { width: 24px; font-size: 15px; }
.tr-clock { width: 72px; flex-direction: column; line-height: 19px; }
.tr-notif { position: relative; width: 48px; padding-right: 8px; }
.tr-note { width: 16px; height: 15px; margin-bottom: 3px; }
.badge {
  position: absolute;
  left: 19px;
  top: 19px;
  width: 16px;
  height: 16px;
  border-radius: 50%;
  background: #3c3c3c;
  font: 700 11px/16px "Noto Sans", sans-serif;
  text-align: center;
}
.tr-show { width: 5px; border-left: 1px solid #6b7780; }

.watermark {
  position: absolute;
  left: 1527px;
  top: 900px;
  font: 15px/18px "Liberation Sans", sans-serif;
  letter-spacing: .2px;
  color: #a0a0a0;
}
.artifact {
  position: absolute;
  left: 1517px;
  top: 921px;
  width: 163px;
  height: 6px;
  background: linear-gradient(#fff, #fff) 23px 3px / 140px 3px no-repeat;
  border-top: 2px solid transparent;
  border-image: linear-gradient(90deg, #2fb81e 0, #2fb81e 23px, transparent 23px) 2 0 0 0;
}
```
